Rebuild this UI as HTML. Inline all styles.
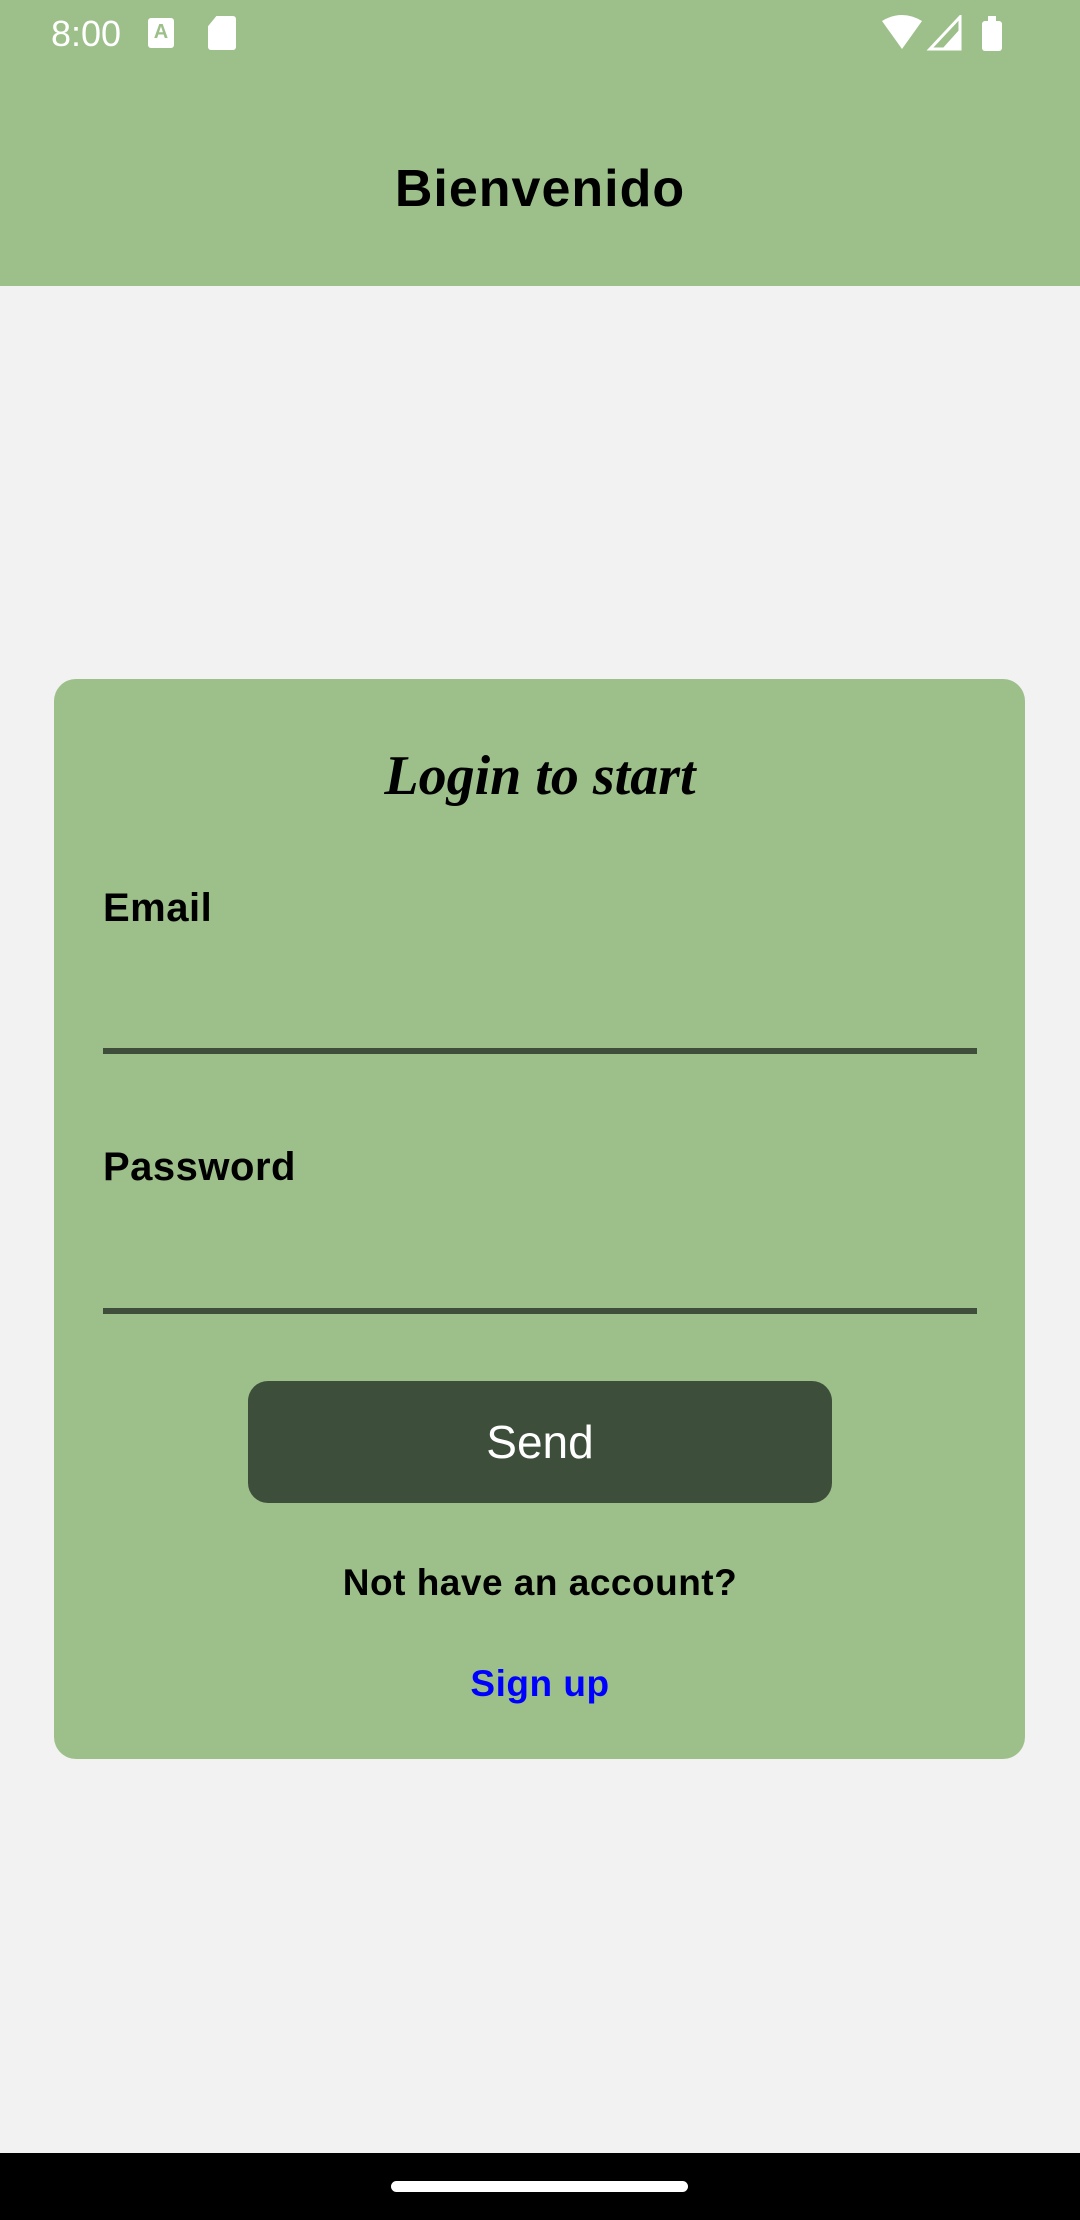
<!DOCTYPE html>
<html><head><meta charset="utf-8"><style>
*{margin:0;padding:0;box-sizing:border-box}
body{width:1080px;height:2220px;background:#f2f2f2;font-family:"Liberation Sans",sans-serif;position:relative;overflow:hidden}
.hdr{position:absolute;left:0;top:0;width:1080px;height:286px;background:#9dc08b}
.t{position:absolute;left:0;width:100%;text-align:center}
.card{position:absolute;left:54px;top:679px;width:971px;height:1080px;background:#9dc08b;border-radius:22px}
.lbl{position:absolute;left:103px;font-weight:bold;font-size:40px;color:#000;letter-spacing:0.5px}
.line{position:absolute;left:103px;width:874px;height:6px;background:#3e4e3b}
.btn{position:absolute;left:248px;top:1381px;width:584px;height:122px;background:#3d4f3b;border-radius:20px;color:#fff;font-size:46px;text-align:center;line-height:122px}
</style></head><body>
<div class="hdr"></div>
<div style="position:absolute;left:51px;top:13px;color:#fff;font-size:36px">8:00</div>
<div style="position:absolute;left:148px;top:18px;width:26px;height:30px;background:#fff;border-radius:3px;color:#9dc08b;font-size:20px;font-weight:bold;text-align:center;line-height:28px">A</div>
<div style="position:absolute;left:208px;top:16px;width:28px;height:34px;background:#fff;border-radius:3px;clip-path:polygon(30% 0,100% 0,100% 100%,0 100%,0 30%)"></div>
<svg style="position:absolute;left:880px;top:15px" width="130" height="36"><path d="M2 6 Q22 -6 42 6 L22 34 Z" fill="#fff"/><path d="M50 34 L80 2 L80 34 Z" fill="none" stroke="#fff" stroke-width="3"/><path d="M62 34 L80 14 L80 34Z" fill="#fff"/><rect x="102" y="6" width="20" height="30" rx="3" fill="#fff"/><rect x="108" y="1" width="8" height="6" fill="#fff"/></svg>
<div class="t" style="top:159px;font-size:52px;font-weight:bold;letter-spacing:1px">Bienvenido</div>
<div class="card"></div>
<div class="t" style="top:744px;font-size:56px;font-family:'Liberation Serif',serif;font-style:italic;font-weight:bold">Login to start</div>
<div class="lbl" style="top:886px">Email</div>
<div class="line" style="top:1048px"></div>
<div class="lbl" style="top:1145px">Password</div>
<div class="line" style="top:1308px"></div>
<div class="btn">Send</div>
<div class="t" style="top:1562px;font-size:37px;font-weight:bold;letter-spacing:0.5px">Not have an account?</div>
<div class="t" style="top:1663px;font-size:37px;font-weight:bold;color:#0000ff;letter-spacing:0.5px">Sign up</div>
<div style="position:absolute;left:0;top:2153px;width:1080px;height:67px;background:#000"></div>
<div style="position:absolute;left:391px;top:2181px;width:297px;height:11px;border-radius:6px;background:#fff"></div>
</body></html>
